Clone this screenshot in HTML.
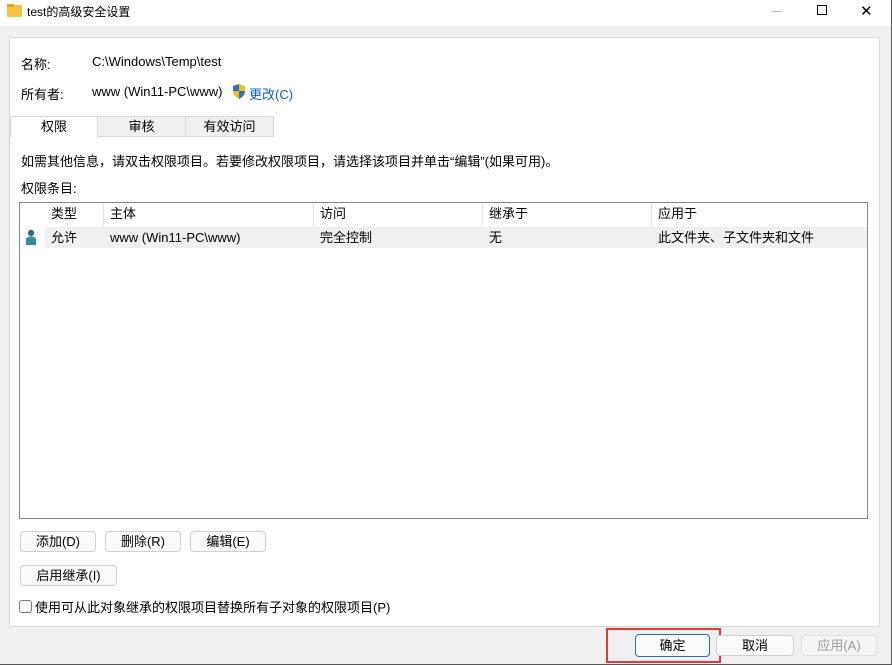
<!DOCTYPE html>
<html><head><meta charset="utf-8"><style>
*{margin:0;padding:0;box-sizing:border-box}
body{width:892px;height:665px;background:#f0f0f0;font-family:"Liberation Sans","Noto Sans CJK SC",sans-serif;font-size:13px;color:#000;position:relative;overflow:hidden}
.a{position:absolute}
.title{left:0;top:0;width:892px;height:26px;background:#fff}
.panel{left:9px;top:37px;width:871px;height:590px;background:#fff;border:1px solid #d9d9d9}
.btn{position:absolute;height:21px;border:1px solid #d0d0d0;border-radius:4px;background:#fbfbfb;text-align:center;line-height:19px;font-size:13px}
.tab{position:absolute;top:116px;height:21px;border:1px solid #d9d9d9;text-align:center;line-height:19px;background:#f0f0f0}
.col{position:absolute;top:203px;height:23px;line-height:22px;border-right:1px solid #e5e5e5;padding-left:6px}
.cell{position:absolute;top:227px;line-height:21px}
</style></head><body>
<div class="a title"></div>
<div class="a" style="left:7px;top:5px;width:15px;height:12px;background:#f5c542;border-radius:1px"></div>
<div class="a" style="left:7px;top:4px;width:7px;height:3px;background:#e0a820"></div>
<div class="a" style="left:27px;top:3px;font-size:12px">test的高级安全设置</div>
<div class="a" style="left:772px;top:11px;width:10px;height:1px;background:#bbb"></div>
<div class="a" style="left:817px;top:5px;width:10px;height:10px;border:1px solid #000"></div>
<div class="a" style="left:860px;top:2px;font-size:15px">✕</div>
<div class="a" style="left:891px;top:0;width:1px;height:665px;background:#555"></div>
<div class="a" style="left:0;top:664px;width:892px;height:1px;background:#555"></div>
<div class="a panel"></div>
<div class="a" style="left:21px;top:54px">名称:</div>
<div class="a" style="left:92px;top:54px">C:\Windows\Temp\test</div>
<div class="a" style="left:21px;top:84px">所有者:</div>
<div class="a" style="left:92px;top:84px">www (Win11-PC\www)</div>
<svg class="a" style="left:232px;top:84px" width="14" height="15" viewBox="0 0 14 15"><path d="M7 0L13 2V7C13 11 10 13.5 7 15 4 13.5 1 11 1 7V2Z" fill="#f5c20a"/><path d="M7 0V7H1V2ZM7 7H13C13 11 10 13.5 7 15Z" fill="#2a6fd6"/></svg>
<div class="a" style="left:249px;top:84px;color:#0a5fc4">更改(C)</div>
<div class="tab" style="left:97px;width:89px">审核</div>
<div class="tab" style="left:185px;width:89px">有效访问</div>
<div class="tab" style="left:10px;width:88px;background:#fff;border-bottom-color:#fff;height:22px">权限</div>
<div class="a" style="left:21px;top:151px">如需其他信息，请双击权限项目。若要修改权限项目，请选择该项目并单击“编辑”(如果可用)。</div>
<div class="a" style="left:21px;top:178px">权限条目:</div>
<div class="a" style="left:19px;top:202px;width:849px;height:317px;border:1px solid #828790;background:#fff"></div>
<div class="col" style="left:45px;width:59px">类型</div>
<div class="col" style="left:104px;width:210px">主体</div>
<div class="col" style="left:314px;width:169px">访问</div>
<div class="col" style="left:483px;width:169px">继承于</div>
<div class="col" style="left:652px;width:215px;border-right:none">应用于</div>
<div class="a" style="left:45px;top:227px;width:822px;height:21px;background:#f0f0f0"></div>
<svg class="a" style="left:25px;top:229px" width="12" height="16" viewBox="0 0 12 16"><circle cx="6" cy="4" r="3.2" fill="#3b6b7a"/><path d="M1 16V11C1 8.5 3 7.5 6 7.5S11 8.5 11 11V16Z" fill="#2f8f9a"/></svg>
<div class="cell" style="left:51px">允许</div>
<div class="cell" style="left:110px">www (Win11-PC\www)</div>
<div class="cell" style="left:320px">完全控制</div>
<div class="cell" style="left:489px">无</div>
<div class="cell" style="left:658px">此文件夹、子文件夹和文件</div>
<div class="btn" style="left:20px;top:531px;width:76px">添加(D)</div>
<div class="btn" style="left:105px;top:531px;width:76px">删除(R)</div>
<div class="btn" style="left:190px;top:531px;width:76px">编辑(E)</div>
<div class="btn" style="left:20px;top:565px;width:97px">启用继承(I)</div>
<div class="a" style="left:19px;top:600px;width:13px;height:13px;border:1px solid #777;border-radius:3px;background:#fafafa"></div>
<div class="a" style="left:35px;top:597px">使用可从此对象继承的权限项目替换所有子对象的权限项目(P)</div>
<div class="a" style="left:606px;top:628px;width:115px;height:35px;border:2px solid #e03a3a"></div>
<div class="btn" style="left:635px;top:634px;width:75px;height:23px;border-color:#2a6fb0;line-height:21px">确定</div>
<div class="btn" style="left:716px;top:635px;width:78px">取消</div>
<div class="btn" style="left:801px;top:635px;width:76px;color:#999;background:#f5f5f5;border-color:#e0e0e0">应用(A)</div>
</body></html>
